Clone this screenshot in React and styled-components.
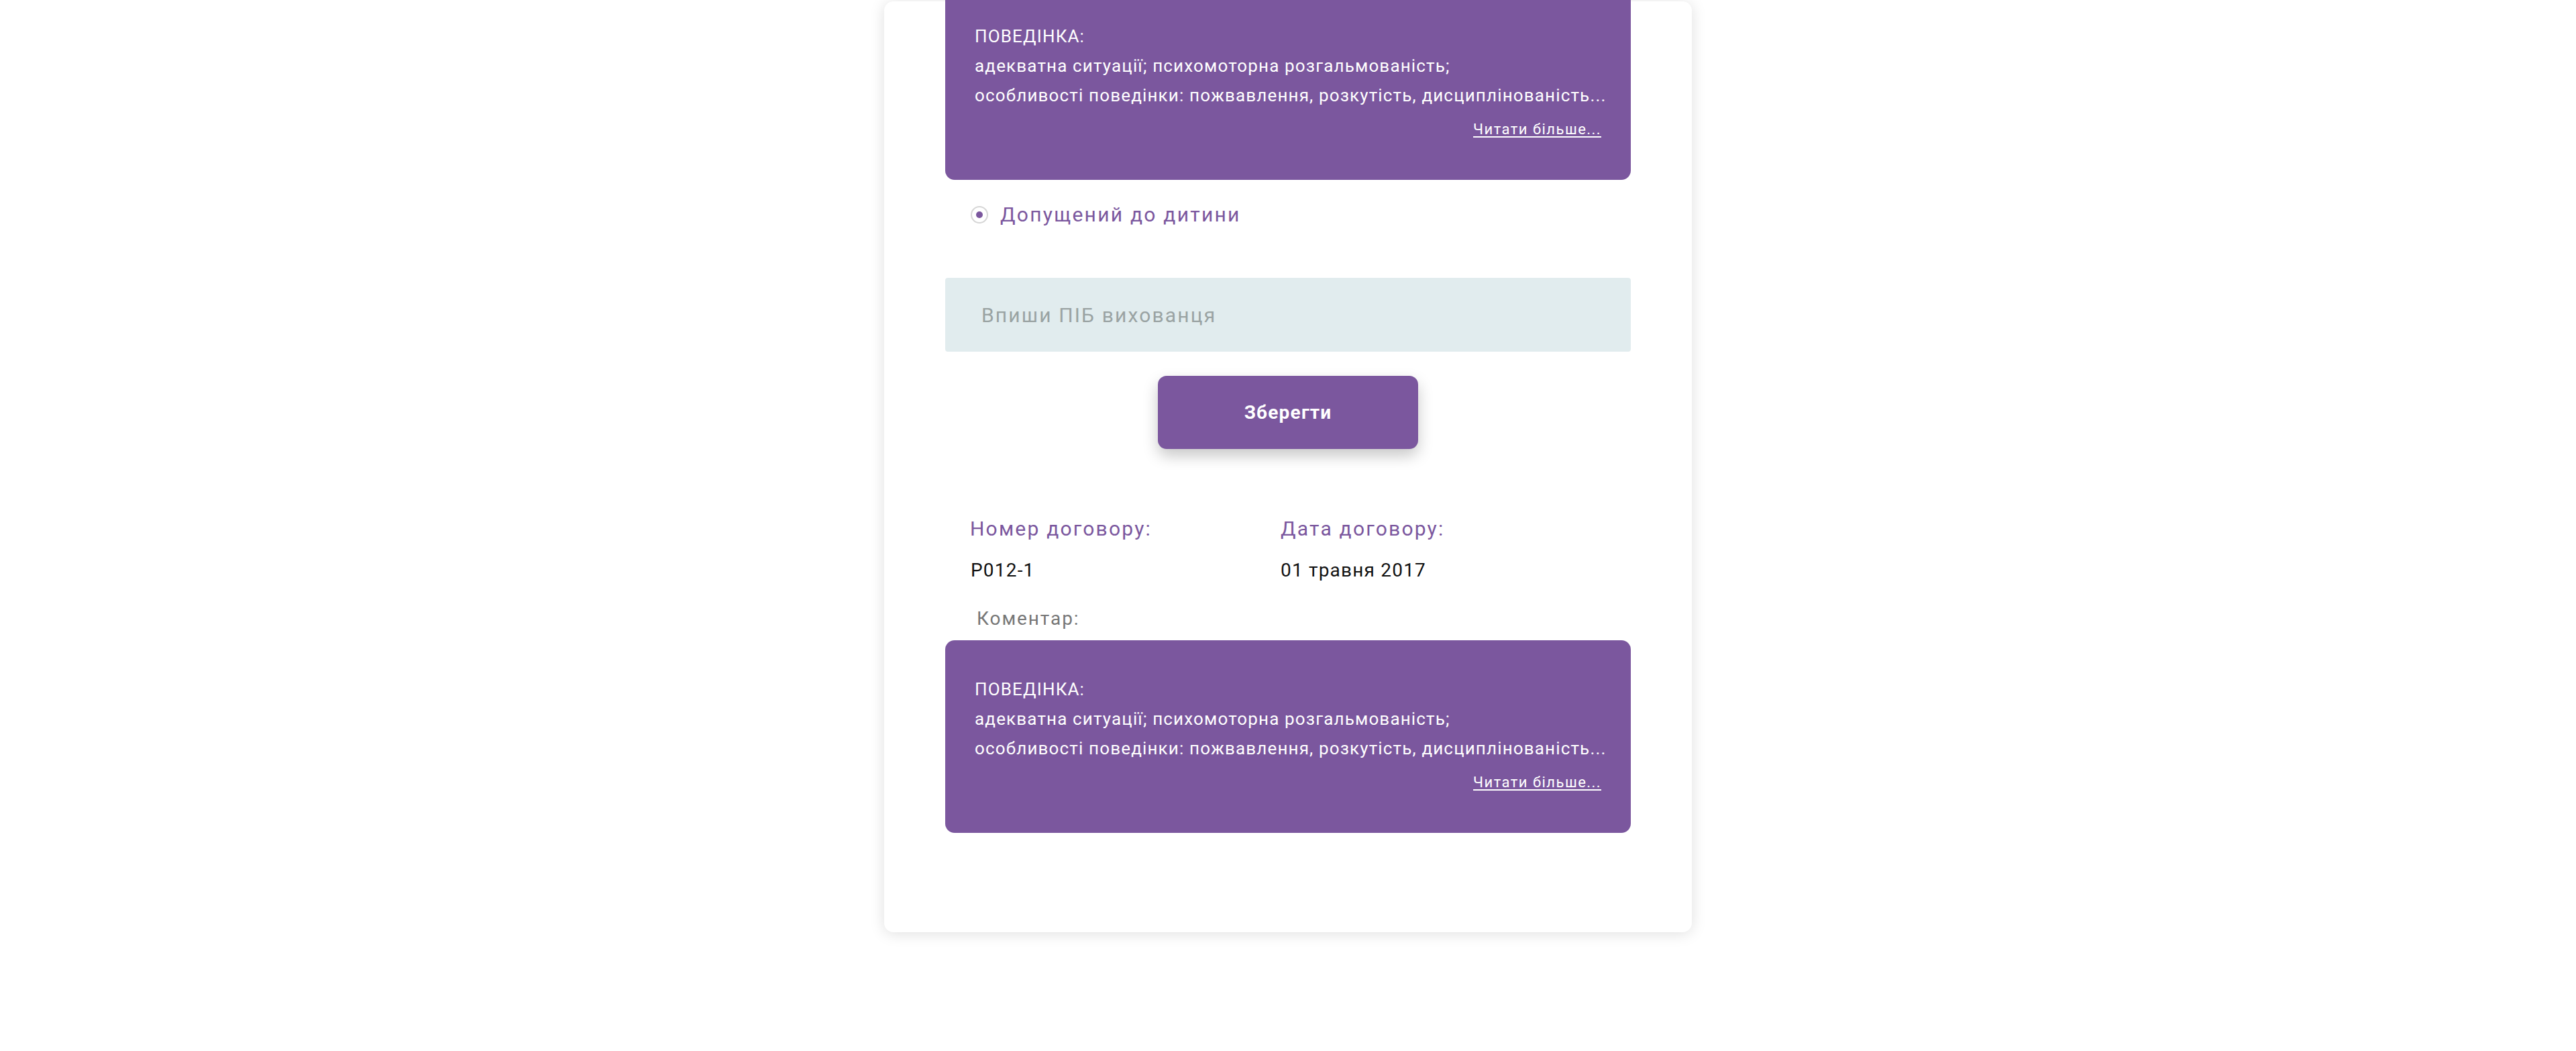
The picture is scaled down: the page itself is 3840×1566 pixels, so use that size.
import React from "react";
import styled, { createGlobalStyle } from "styled-components";

const GlobalStyle = createGlobalStyle`
  html, body {
    margin: 0;
    padding: 0;
    background: #ffffff;
    font-family: Roboto, "Noto Sans", "Liberation Sans", sans-serif;
  }
`;

const purple = "#7b579e";

const Page = styled.div`
  display: flex;
  justify-content: center;
  padding-top: 2px;
  padding-bottom: 170px;
`;

const Card = styled.div`
  width: 1204px;
  box-sizing: border-box;
  padding: 0 91px 148px;
  background: #fff;
  border-radius: 14px;
  box-shadow: 0 2px 22px rgba(0, 0, 0, 0.13);
  display: flex;
  flex-direction: column;
`;

const NoteBox = styled.div`
  background: ${purple};
  border-radius: 14px;
  padding: 51px 44px 60px;
  color: #fff;
  margin-top: ${(p) => (p.$first ? "-21px" : "0")};
`;

const NoteLine = styled.div`
  font-size: 26px;
  line-height: 44px;
  letter-spacing: 1.15px;
  white-space: nowrap;
`;

const ReadMore = styled.a`
  display: block;
  margin-top: 14px;
  text-align: right;
  font-size: 22px;
  line-height: 30px;
  letter-spacing: 1.45px;
  color: #fff;
  text-decoration: underline;
  text-underline-offset: 3px;
`;

const RadioRow = styled.label`
  display: flex;
  align-items: center;
  gap: 18px;
  margin: 32px 0 0 38px;
  color: ${purple};
  font-size: 30px;
  line-height: 40px;
  letter-spacing: 2.25px;
`;

const RadioDot = styled.span`
  width: 26px;
  height: 26px;
  box-sizing: border-box;
  border-radius: 50%;
  border: 2px solid #d6d6d6;
  display: flex;
  align-items: center;
  justify-content: center;
  &::after {
    content: "";
    width: 10px;
    height: 10px;
    border-radius: 50%;
    background: ${purple};
  }
`;

const NameInput = styled.input`
  margin-top: 74px;
  height: 110px;
  box-sizing: border-box;
  border: none;
  border-radius: 4px;
  background: #e1ecee;
  padding: 0 54px;
  font-family: inherit;
  font-size: 30px;
  letter-spacing: 2.15px;
  color: #333;
  outline: none;
  &::placeholder {
    color: #9aa3a3;
  }
`;

const SaveButton = styled.button`
  align-self: center;
  margin-top: 36px;
  width: 388px;
  height: 109px;
  border: none;
  border-radius: 13px;
  background: ${purple};
  color: #fff;
  font-family: inherit;
  font-weight: 700;
  font-size: 28px;
  letter-spacing: 1.2px;
  box-shadow: 0 10px 22px rgba(0, 0, 0, 0.22);
  cursor: pointer;
`;

const InfoGrid = styled.div`
  display: grid;
  grid-template-columns: 463px 1fr;
  row-gap: 22px;
  margin-top: 99px;
  padding-left: 37px;
`;

const Label = styled.div`
  color: ${purple};
  font-size: 30px;
  line-height: 40px;
  letter-spacing: 2.2px;
`;

const Value = styled.div`
  color: #111;
  font-size: 28px;
  line-height: 40px;
  letter-spacing: 1.2px;
  padding-left: ${(p) => (p.$shift ? "0" : "1px")};
`;

const CommentLabel = styled.div`
  margin: 32px 0 12px 47px;
  color: #777;
  font-size: 28px;
  line-height: 40px;
  letter-spacing: 1.9px;
`;

const Note = ({ first }) => (
  <NoteBox $first={first}>
    <NoteLine>ПОВЕДІНКА:</NoteLine>
    <NoteLine>адекватна ситуації; психомоторна розгальмованість;</NoteLine>
    <NoteLine>
      особливості поведінки: пожвавлення, розкутість, дисциплінованість...
    </NoteLine>
    <ReadMore href="#">Читати більше...</ReadMore>
  </NoteBox>
);

const App = () => {
  return (
    <>
      <GlobalStyle />
      <Page>
        <Card>
          <Note first />
          <RadioRow>
            <RadioDot />
            Допущений до дитини
          </RadioRow>
          <NameInput placeholder="Впиши ПІБ вихованця" />
          <SaveButton>Зберегти</SaveButton>
          <InfoGrid>
            <Label>Номер договору:</Label>
            <Label>Дата договору:</Label>
            <Value>Р012-1</Value>
            <Value $shift>01 травня 2017</Value>
          </InfoGrid>
          <CommentLabel>Коментар:</CommentLabel>
          <Note />
        </Card>
      </Page>
    </>
  );
};

export default App;
